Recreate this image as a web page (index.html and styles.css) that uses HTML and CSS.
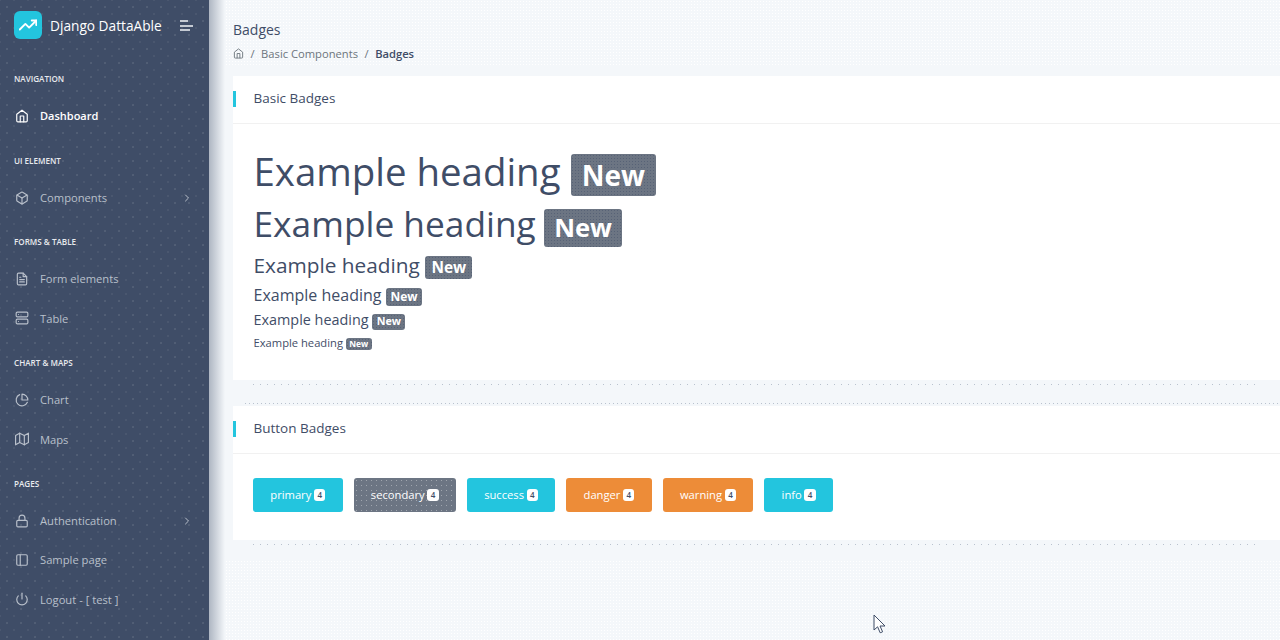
FILE: index.html
```html
<!DOCTYPE html>
<html lang="en">
<head>
  <meta charset="UTF-8">
  <title>Badges</title>
  <link rel="stylesheet" href="styles.css">
</head>
<body>

  <nav class="sidebar">
    <div class="brand">
      <span class="brand-logo">
        <svg width="18" height="18" viewBox="0 0 24 24" fill="none" stroke="#fff" stroke-width="2.5" stroke-linecap="round" stroke-linejoin="round"><polyline points="23 6 13.5 15.5 8.5 10.5 1 18"/><polyline points="17 6 23 6 23 12"/></svg>
      </span>
      <span class="brand-name">Django DattaAble</span>
      <span class="menu-toggle"><i class="bar-1"></i><i class="bar-2"></i><i class="bar-3"></i></span>
    </div>

    <div class="nav-label">Navigation</div>
    <a class="nav-item active">
      <svg class="nav-icon" viewBox="0 0 24 24"><path d="M3 9l9-7 9 7v11a2 2 0 0 1-2 2H5a2 2 0 0 1-2-2z"/><polyline points="9 22 9 12 15 12 15 22"/></svg>
      Dashboard
    </a>

    <div class="nav-label">UI Element</div>
    <a class="nav-item">
      <svg class="nav-icon" viewBox="0 0 24 24"><path d="M21 16V8a2 2 0 0 0-1-1.73l-7-4a2 2 0 0 0-2 0l-7 4A2 2 0 0 0 3 8v8a2 2 0 0 0 1 1.73l7 4a2 2 0 0 0 2 0l7-4A2 2 0 0 0 21 16z"/><polyline points="3.27 6.96 12 12.01 20.73 6.96"/><line x1="12" y1="22.08" x2="12" y2="12"/></svg>
      Components
      <svg class="nav-arrow" viewBox="0 0 24 24"><polyline points="9 18 15 12 9 6"/></svg>
    </a>

    <div class="nav-label">Forms &amp; Table</div>
    <a class="nav-item">
      <svg class="nav-icon" viewBox="0 0 24 24"><path d="M14 2H6a2 2 0 0 0-2 2v16a2 2 0 0 0 2 2h12a2 2 0 0 0 2-2V8z"/><polyline points="14 2 14 8 20 8"/><line x1="16" y1="13" x2="8" y2="13"/><line x1="16" y1="17" x2="8" y2="17"/><polyline points="10 9 9 9 8 9"/></svg>
      Form elements
    </a>
    <a class="nav-item">
      <svg class="nav-icon" viewBox="0 0 24 24"><rect x="2" y="2" width="20" height="8" rx="2" ry="2"/><rect x="2" y="14" width="20" height="8" rx="2" ry="2"/><line x1="6" y1="6" x2="6.01" y2="6"/><line x1="6" y1="18" x2="6.01" y2="18"/></svg>
      Table
    </a>

    <div class="nav-label">Chart &amp; Maps</div>
    <a class="nav-item">
      <svg class="nav-icon" viewBox="0 0 24 24"><path d="M21.21 15.89A10 10 0 1 1 8 2.83"/><path d="M22 12A10 10 0 0 0 12 2v10z"/></svg>
      Chart
    </a>
    <a class="nav-item">
      <svg class="nav-icon" viewBox="0 0 24 24"><polygon points="1 6 1 22 8 18 16 22 23 18 23 2 16 6 8 2 1 6"/><line x1="8" y1="2" x2="8" y2="18"/><line x1="16" y1="6" x2="16" y2="22"/></svg>
      Maps
    </a>

    <div class="nav-label">Pages</div>
    <a class="nav-item">
      <svg class="nav-icon" viewBox="0 0 24 24"><rect x="3" y="11" width="18" height="11" rx="2" ry="2"/><path d="M7 11V7a5 5 0 0 1 10 0v4"/></svg>
      Authentication
      <svg class="nav-arrow" viewBox="0 0 24 24"><polyline points="9 18 15 12 9 6"/></svg>
    </a>
    <a class="nav-item">
      <svg class="nav-icon" viewBox="0 0 24 24"><rect x="3" y="3" width="18" height="18" rx="2" ry="2"/><line x1="9" y1="3" x2="9" y2="21"/></svg>
      Sample page
    </a>
    <a class="nav-item">
      <svg class="nav-icon" viewBox="0 0 24 24"><path d="M18.36 6.64a9 9 0 1 1-12.73 0"/><line x1="12" y1="2" x2="12" y2="12"/></svg>
      Logout - [ test ]
    </a>
  </nav>

  <main class="content">
    <div class="page-header">
      <h5 class="page-title">Badges</h5>
      <div class="breadcrumb">
        <svg class="crumb-home" viewBox="0 0 24 24"><path d="M3 9l9-7 9 7v11a2 2 0 0 1-2 2H5a2 2 0 0 1-2-2z"/><polyline points="9 22 9 12 15 12 15 22"/></svg>
        <span class="crumb-sep">/</span>
        <span>Basic Components</span>
        <span class="crumb-sep">/</span>
        <span class="crumb-current">Badges</span>
      </div>
    </div>

    <section class="card">
      <div class="card-header"><h5>Basic Badges</h5></div>
      <div class="card-body headings">
        <div class="h1">Example heading <span class="badge">New</span></div>
        <div class="h2">Example heading <span class="badge">New</span></div>
        <div class="h3">Example heading <span class="badge">New</span></div>
        <div class="h4">Example heading <span class="badge">New</span></div>
        <div class="h5">Example heading <span class="badge">New</span></div>
        <div class="h6">Example heading <span class="badge">New</span></div>
      </div>
    </section>

    <section class="card">
      <div class="card-header"><h5>Button Badges</h5></div>
      <div class="card-body buttons">
        <button class="btn btn-cyan">primary <span class="count">4</span></button>
        <button class="btn btn-grey">secondary <span class="count">4</span></button>
        <button class="btn btn-cyan">success <span class="count">4</span></button>
        <button class="btn btn-orange">danger <span class="count">4</span></button>
        <button class="btn btn-orange">warning <span class="count">4</span></button>
        <button class="btn btn-cyan">info <span class="count">4</span></button>
      </div>
    </section>

    <div class="page-fill"></div>
  </main>

  <svg class="cursor" width="14" height="20" viewBox="0 0 14 20"><path d="M1 1v15l3.6-3.2 2.6 6 2.4-1-2.6-5.8H12z" fill="#fff" stroke="#3f4d67" stroke-width="1"/></svg>

</body>
</html>
```

FILE: styles.css
```css
* {
  box-sizing: border-box;
}
html, body {
  height: 100%;
}
body {
  margin: 0;
  height: 640px;
  overflow: hidden;
  display: flex;
  font-family: "Open Sans", sans-serif;
  color: #3f4d67;
  background-color: #f4f7fa;
  position: relative;
}

/* sidebar */
.sidebar {
  flex: 0 0 209px;
  height: 640px;
  color: #b9c0cb;
  background-color: #3f4d67;
  background-image:
    radial-gradient(circle, rgba(255,255,255,.2) 0.6px, transparent 0.8px),
    radial-gradient(circle, rgba(255,255,255,.12) 0.6px, transparent 0.8px);
  background-size: 14px 14px, 14px 14px;
  background-position: 0 0, 7px 7px;
}
.brand {
  height: 54px;
  padding: 11px 16px 0 14px;
  display: flex;
  align-items: flex-start;
}
.brand-logo {
  width: 28px;
  height: 28px;
  border-radius: 6px;
  background: #23c5de;
  display: flex;
  align-items: center;
  justify-content: center;
}
.brand-name {
  margin-left: 8px;
  color: #fff;
  font-size: 13.7px;
  line-height: 30px;
  flex: 1;
}
.menu-toggle {
  margin-top: 9px;
  width: 13px;
}
.menu-toggle i {
  display: block;
  height: 2px;
  margin-bottom: 2.5px;
  background: #c4cad3;
}
.menu-toggle .bar-1 { width: 8px; }
.menu-toggle .bar-2 { width: 13px; }
.menu-toggle .bar-3 { width: 10px; }

.nav-label {
  padding: 18px 14px 10px;
  font-size: 8.1px;
  line-height: 14px;
  font-weight: 600;
  text-transform: uppercase;
  color: #e8eaee;
}
.nav-item {
  display: flex;
  align-items: center;
  height: 39.4px;
  padding: 0 16px 0 15px;
  font-size: 11.2px;
}
.nav-item.active {
  height: 39.9px;
  color: #fff;
  font-weight: 600;
  font-size: 11px;
}
.nav-icon {
  width: 14px;
  height: 14px;
  margin-right: 11px;
  fill: none;
  stroke: currentColor;
  stroke-width: 2;
  stroke-linecap: round;
  stroke-linejoin: round;
}
.nav-arrow {
  width: 12px;
  height: 12px;
  margin-left: auto;
  fill: none;
  stroke: currentColor;
  stroke-width: 2;
  stroke-linecap: round;
  stroke-linejoin: round;
}

/* main */
.content {
  flex: 1;
  min-width: 0;
  height: 640px;
  padding: 0 0 0 24px;
  position: relative;
}
.content::before {
  content: "";
  position: absolute;
  left: 0;
  top: 0;
  bottom: 0;
  width: 16px;
  background: linear-gradient(to right, #aeb6c2, #f4f7fa);
}
.page-header,
.page-fill {
  margin-left: -8px;
  padding-left: 8px;
  background-image: radial-gradient(circle, #fff 0.6px, transparent 0.7px);
  background-size: 3px 3px;
}
.page-header {
  height: 66px;
  margin-bottom: 10px;
  padding-top: 21px;
}
.page-fill {
  height: 80px;
  margin-top: 20px;
}
.page-title {
  margin: 0;
  font-size: 14px;
  line-height: 18px;
  font-weight: 400;
}
.breadcrumb {
  margin-top: 7px;
  display: flex;
  align-items: center;
  font-size: 11.2px;
  line-height: 15px;
  color: #6c757d;
}
.crumb-home {
  width: 11px;
  height: 11px;
  fill: none;
  stroke: currentColor;
  stroke-width: 2;
}
.crumb-sep {
  margin: 0 6.5px;
}
.crumb-current {
  color: #3f4d67;
  font-weight: 600;
}

.card {
  width: 1060px;
  background: #fff;
  margin-bottom: 26px;
  position: relative;
}
.card::after {
  content: "";
  position: absolute;
  left: 20px;
  right: 33px;
  bottom: -5px;
  height: 1px;
  background: repeating-linear-gradient(to right, #b9c2ce 0 1px, transparent 1px 7px);
}
.card + .card {
  margin-bottom: 0;
}
.card + .card::before {
  content: "";
  position: absolute;
  left: 12px;
  right: 0;
  top: -3px;
  height: 1px;
  background: repeating-linear-gradient(to right, #b9c2ce 0 1px, transparent 1px 4px);
}
.card-header {
  height: 48px;
  padding: 0 0 4px 20.5px;
  border-bottom: 1px solid #f1f1f1;
  display: flex;
  align-items: center;
  position: relative;
}
.card-header::before {
  content: "";
  position: absolute;
  left: 0;
  top: 15px;
  width: 3px;
  height: 16px;
  background: #23c5de;
}
.card-header h5 {
  margin: 0;
  font-size: 13.5px;
  font-weight: 400;
}
.card-body {
  padding: 24px 20px 28px;
}

.headings {
  height: 256px;
  padding: 24px 20px 0 20.5px;
}
.headings div {
  white-space: nowrap;
}
.badge {
  display: inline-block;
  padding: .25em .4em;
  font-size: 75%;
  font-weight: 700;
  line-height: 1;
  color: #fff;
  background-color: #6c7583;
  background-image: radial-gradient(circle, rgba(63,77,103,.45) 0.6px, transparent 0.8px);
  background-size: 3px 3px;
  border-radius: 3px;
  vertical-align: baseline;
}
.h1 { font-size: 38.4px; line-height: 46px; margin-bottom: 6px; }
.h2 { font-size: 35.3px; line-height: 42px; margin-bottom: 5px; }
.h3 { font-size: 20.8px; line-height: 26px; margin-bottom: 6px; }
.h4 { font-size: 16px; line-height: 20px; margin-bottom: 5px; }
.h5 { font-size: 14.4px; line-height: 18px; margin-bottom: 6px; }
.h6 { font-size: 11.2px; line-height: 14px; }

.h1 .badge { font-size: 28px; }
.h2 .badge { font-size: 25.6px; margin-left: -1px; }
.h3 .badge { font-size: 15.4px; }

.buttons {
  display: flex;
  gap: 10.9px;
}
.btn {
  height: 34px;
  padding: 0 17.3px 1px;
  border: none;
  border-radius: 3px;
  color: #fff;
  font-family: inherit;
  font-size: 11.2px;
  display: flex;
  align-items: center;
  gap: 2.7px;
}
.btn-cyan { background: #23c5de; }
.btn-grey {
  background-color: #6c7583;
  background-image: radial-gradient(circle, rgba(255,255,255,.35) 0.6px, transparent 0.8px);
  background-size: 5px 5px;
}
.btn-orange { background: #ed8c38; }
.count {
  background: #fff;
  color: #3f4d67;
  font-size: 8px;
  font-weight: 600;
  line-height: 12px;
  padding: 0 3.4px;
  border-radius: 3px;
}

.cursor {
  position: absolute;
  left: 873px;
  top: 614px;
}
```
